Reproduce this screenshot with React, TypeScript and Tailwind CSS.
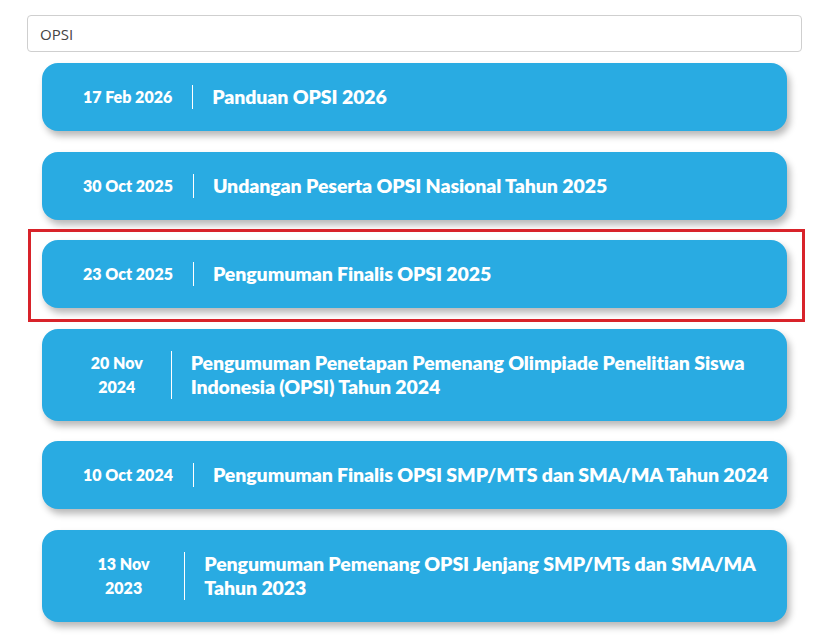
import { useState } from 'react';

const posts = [
  { date: '17 Feb 2026', title: 'Panduan OPSI 2026' },
  { date: '30 Oct 2025', title: 'Undangan Peserta OPSI Nasional Tahun 2025' },
  { date: '23 Oct 2025', title: 'Pengumuman Finalis OPSI 2025', marked: true },
  { date: '20 Nov 2024', title: 'Pengumuman Penetapan Pemenang Olimpiade Penelitian Siswa Indonesia (OPSI) Tahun 2024' },
  { date: '10 Oct 2024', title: 'Pengumuman Finalis OPSI SMP/MTS dan SMA/MA Tahun 2024' },
  { date: '13 Nov 2023', title: 'Pengumuman Pemenang OPSI Jenjang SMP/MTs dan SMA/MA Tahun 2023' },
];

const App = () => {
  const [query, setQuery] = useState('OPSI');

  return (
    <div className="min-h-screen bg-white pt-[15px] pl-[27px] pr-[11px] font-['Lato','Open_Sans',sans-serif]">
      {/* Search box */}
      <input
        value={query}
        onChange={(e) => setQuery(e.target.value)}
        className="w-full h-[37px] border border-[#cfcfcf] rounded-[4px] px-[12px] text-[15px] text-[#444] outline-none font-['Open_Sans',sans-serif]"
      />

      {/* Announcement list */}
      <div className="flex flex-col gap-[20.5px] px-[15px] pt-[11px]">
        {posts.map((post) => (
          <div key={post.date} className="relative">
            {post.marked && (
              <div className="absolute left-[-14px] right-[-18px] top-[-11px] bottom-[-14px] border-[3px] border-[#d8232a] pointer-events-none" />
            )}
            <a
              href="#"
              className="flex items-center rounded-[16px] bg-[#29abe2] py-[22px] pl-[20px] pr-[6px] text-white shadow-[3px_5px_7px_rgba(0,0,0,0.28)]"
            >
              <div className="border-r border-white pl-[21px] pr-[20px] text-center text-[16px] font-extrabold leading-[24px]">
                {post.date}
              </div>
              <div className="pl-[19px] text-[19.5px] tracking-[-0.1px] font-extrabold leading-[24px]">{post.title}</div>
            </a>
          </div>
        ))}
      </div>
    </div>
  );
};

export default App;
